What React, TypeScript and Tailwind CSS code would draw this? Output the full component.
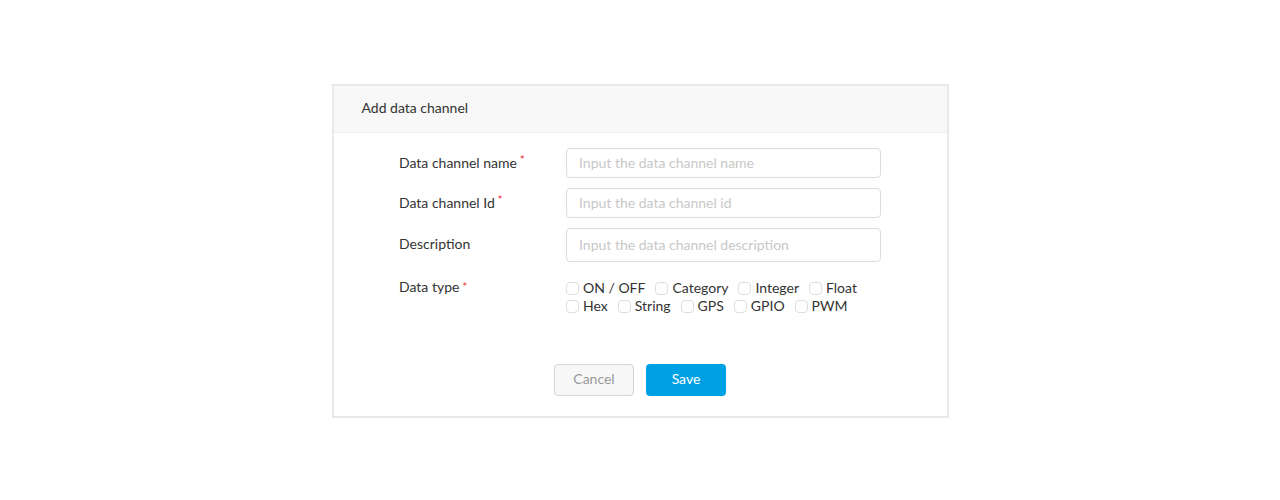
import { useState } from "react";

const types = [
  ["ON / OFF", "Category", "Integer", "Float"],
  ["Hex", "String", "GPS", "GPIO", "PWM"],
];

function Label({ text, required }: { text: string; required?: boolean }) {
  return (
    <div className="w-[167px] shrink-0 pb-[2px] text-[14px] text-[#333]">
      {text}
      {required ? <span className="ml-[3px] align-top text-[11px] text-[#f5222d]">*</span> : null}
    </div>
  );
}

export default function App() {
  const [checked, setChecked] = useState<string[]>([]);

  function toggle(t: string) {
    setChecked((c) => (c.includes(t) ? c.filter((x) => x !== t) : [...c, t]));
  }

  return (
    <div className="flex h-[500px] w-full items-start justify-center bg-white pt-[84px] font-['Lato',sans-serif]">
      <div className="w-[617px] border-2 border-[#e9e9e9] bg-white">
        <div className="flex h-[47px] items-center border-b border-[#eeeeee] bg-[#f8f8f8] px-[28px] pb-[3px] text-[14px] text-[#333]">
          Add data channel
        </div>
        <div className="mx-auto w-[482px] pt-[15px]">
          <div className="flex items-center">
            <Label text="Data channel name" required />
            <input
              className="h-[30px] flex-1 rounded border border-[#dcdcdc] px-3 pb-[2px] text-[14px] text-[#333] outline-none placeholder:text-[#c8c8c8]"
              placeholder="Input the data channel name"
            />
          </div>
          <div className="mt-[10px] flex items-center">
            <Label text="Data channel Id" required />
            <input
              className="h-[30px] flex-1 rounded border border-[#dcdcdc] px-3 pb-[2px] text-[14px] text-[#333] outline-none placeholder:text-[#c8c8c8]"
              placeholder="Input the data channel id"
            />
          </div>
          <div className="mt-[10px] flex items-start">
            <div className="pt-[5px]">
              <Label text="Description" />
            </div>
            <input
              className="h-[34px] flex-1 rounded border border-[#dcdcdc] px-3 pb-[2px] text-[14px] text-[#333] outline-none placeholder:text-[#c8c8c8]"
              placeholder="Input the data channel description"
            />
          </div>
          <div className="mt-[16px] flex items-start">
            <div className="leading-[18px]">
              <Label text="Data type" required />
            </div>
            <div className="flex flex-col">
              {types.map((row, i) => (
                <div key={i} className="flex h-[18px] items-center">
                  {row.map((t) => (
                    <label key={t} className="mr-[10px] flex cursor-pointer items-center text-[14px] text-[#333]">
                      <span
                        onClick={() => toggle(t)}
                        className={
                          "mr-[4px] mt-[3px] h-[13px] w-[13px] rounded-[4px] border " +
                          (checked.includes(t) ? "border-[#00a0e4] bg-[#00a0e4]" : "border-[#dedede] bg-white")
                        }
                      />
                      {t}
                    </label>
                  ))}
                </div>
              ))}
            </div>
          </div>
          <div className="mt-[50px] flex justify-center gap-3 pb-[20px]">
            <button className="h-[32px] w-[80px] rounded border border-[#d4d4d4] bg-[#f7f7f7] pb-[3px] text-[14px] text-[#999]">
              Cancel
            </button>
            <button className="h-[32px] w-[80px] rounded bg-[#00a0e4] pb-[3px] text-[14px] text-white">Save</button>
          </div>
        </div>
      </div>
    </div>
  );
}
